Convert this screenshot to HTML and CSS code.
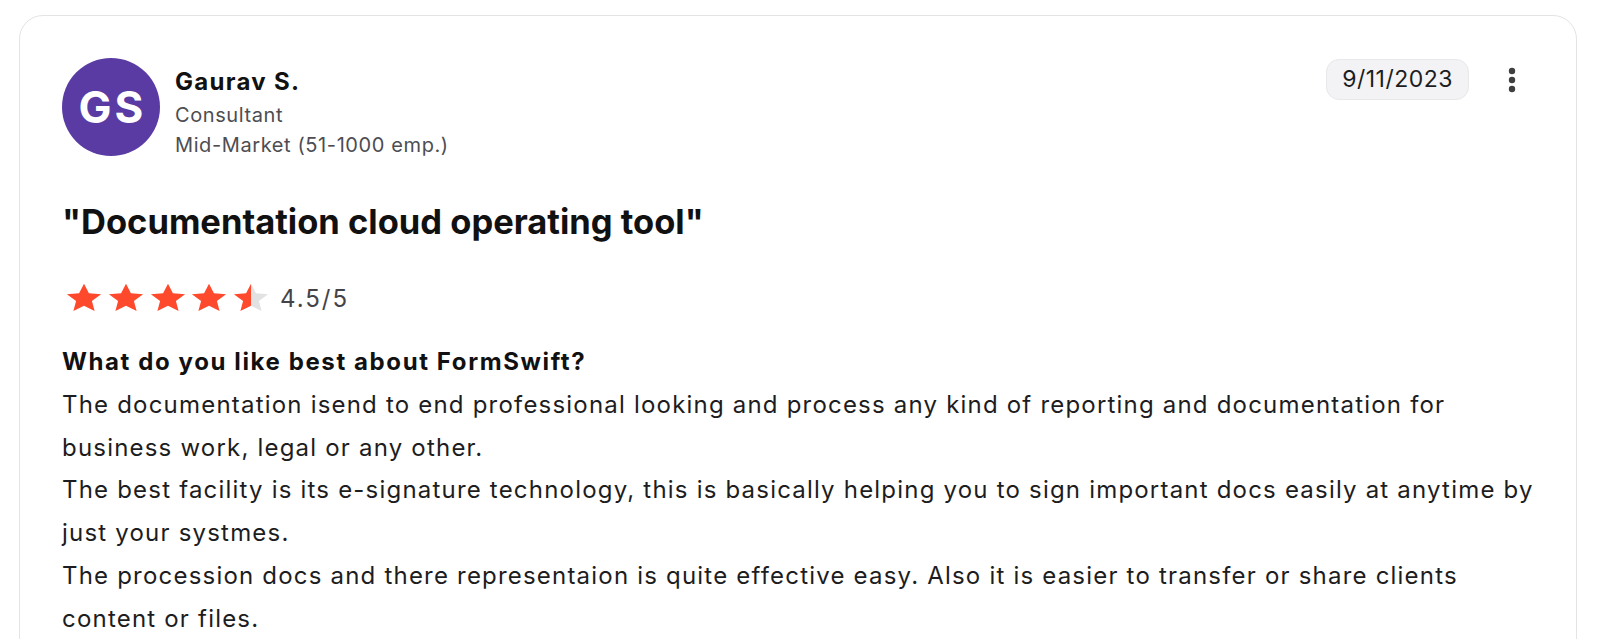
FILE: index.html
```html
<!DOCTYPE html>
<html lang="en">
<head>
<meta charset="utf-8">
<title>Review</title>
<link rel="stylesheet" href="styles.css">
</head>
<body>
<article class="card">
  <header class="head">
    <div class="reviewer">
      <div class="avatar"><span>GS</span></div>
      <div class="who">
        <div class="name">Gaurav S.</div>
        <div class="meta">Consultant</div>
        <div class="meta">Mid-Market (51-1000 emp.)</div>
      </div>
    </div>
    <div class="actions">
      <span class="date">9/11/2023</span>
      <svg class="kebab" width="24" height="30" viewBox="0 0 24 30" aria-hidden="true">
        <circle cx="12" cy="6" r="3.2" fill="#3f3f3f"/>
        <circle cx="12" cy="15" r="3.2" fill="#3f3f3f"/>
        <circle cx="12" cy="24" r="3.2" fill="#3f3f3f"/>
      </svg>
    </div>
  </header>

  <h2 class="title">"Documentation cloud operating tool"</h2>

  <div class="rating">
    <div class="stars">
      <svg class="star" viewBox="0 0 24 24" preserveAspectRatio="none"><path d="M12 1.3l3.1 7.1 7.7.7-5.8 5.1 1.7 7.6L12 17.8l-6.7 4 1.7-7.6-5.8-5.1 7.7-.7z" fill="#ff492c"/></svg>
      <svg class="star" viewBox="0 0 24 24" preserveAspectRatio="none"><path d="M12 1.3l3.1 7.1 7.7.7-5.8 5.1 1.7 7.6L12 17.8l-6.7 4 1.7-7.6-5.8-5.1 7.7-.7z" fill="#ff492c"/></svg>
      <svg class="star" viewBox="0 0 24 24" preserveAspectRatio="none"><path d="M12 1.3l3.1 7.1 7.7.7-5.8 5.1 1.7 7.6L12 17.8l-6.7 4 1.7-7.6-5.8-5.1 7.7-.7z" fill="#ff492c"/></svg>
      <svg class="star" viewBox="0 0 24 24" preserveAspectRatio="none"><path d="M12 1.3l3.1 7.1 7.7.7-5.8 5.1 1.7 7.6L12 17.8l-6.7 4 1.7-7.6-5.8-5.1 7.7-.7z" fill="#ff492c"/></svg>
      <svg class="star" viewBox="0 0 24 24" preserveAspectRatio="none">
        <defs><linearGradient id="half" x1="0" x2="1" y1="0" y2="0"><stop offset="0.5" stop-color="#ff492c"/><stop offset="0.5" stop-color="#e2e2e2"/></linearGradient></defs>
        <path d="M12 1.3l3.1 7.1 7.7.7-5.8 5.1 1.7 7.6L12 17.8l-6.7 4 1.7-7.6-5.8-5.1 7.7-.7z" fill="url(#half)"/>
      </svg>
    </div>
    <span class="score">4.5/5</span>
  </div>

  <section class="answer">
    <h3 class="question">What do you like best about FormSwift?</h3>
    <p class="body">The documentation isend to end professional looking and process any kind of reporting and documentation for<br>business work, legal or any other.<br>The best facility is its e-signature technology, this is basically helping you to sign important docs easily at anytime by<br>just your systmes.<br>The procession docs and there representaion is quite effective easy. Also it is easier to transfer or share clients<br>content or files.</p>
  </section>
</article>
</body>
</html>
```

FILE: styles.css
```css
* { box-sizing: border-box; }

html, body {
  margin: 0;
  padding: 0;
  background: #ffffff;
}

body {
  font-family: Inter, "Noto Sans", sans-serif;
  color: #1d1d21;
  overflow: hidden;
}

.card {
  margin: 15px 0 0 19px;
  width: 1558px;
  min-height: 800px;
  border: 1.5px solid #e4e4e6;
  border-radius: 24px;
  padding: 42px 42px 40px 42px;
}

.head {
  display: flex;
  justify-content: space-between;
  align-items: flex-start;
}

.reviewer {
  display: flex;
  align-items: flex-start;
  gap: 15px;
}

.avatar {
  width: 98px;
  height: 98px;
  border-radius: 50%;
  background: #5a3ba4;
  color: #fff;
  display: flex;
  align-items: center;
  justify-content: center;
  font-size: 44px;
  font-weight: 700;
  letter-spacing: 3px;
  padding-left: 3px;
}

.who {
  padding-top: 6px;
}

.name {
  font-size: 24px;
  font-weight: 700;
  line-height: 36px;
  letter-spacing: 1.3px;
  color: #111;
}

.meta {
  font-size: 20px;
  line-height: 30px;
  letter-spacing: 0.6px;
  color: #4d4d52;
}

.actions {
  display: flex;
  align-items: center;
  gap: 31px;
  padding-top: 1px;
  padding-right: 10px;
}

.date {
  display: inline-block;
  height: 41px;
  line-height: 39px;
  padding: 0 15px;
  border: 1px solid #e8e8ea;
  border-radius: 13px;
  background: #f3f3f5;
  font-size: 23px;
  letter-spacing: 0.5px;
  color: #1d1d21;
}

.kebab {
  display: block;
}

.title {
  margin: 40px 0 0 0;
  font-size: 34.5px;
  font-weight: 700;
  line-height: 44px;
  color: #111;
}

.rating {
  display: flex;
  align-items: center;
  gap: 10px;
  margin: 38px 0 0 3px;
}

.stars {
  display: flex;
  gap: 3.75px;
}

.star {
  width: 38px;
  height: 32px;
  display: block;
}

.score {
  font-size: 24px;
  letter-spacing: 2px;
  color: #444448;
}

.answer {
  margin-top: 32px;
}

.question {
  margin: 0;
  font-size: 24px;
  font-weight: 700;
  line-height: 32px;
  letter-spacing: 1.6px;
  color: #111;
}

.body {
  margin: 6px 0 0 0;
  font-size: 24px;
  line-height: 42.7px;
  letter-spacing: 1.2px;
  white-space: nowrap;
  color: #1d1d21;
}
```
